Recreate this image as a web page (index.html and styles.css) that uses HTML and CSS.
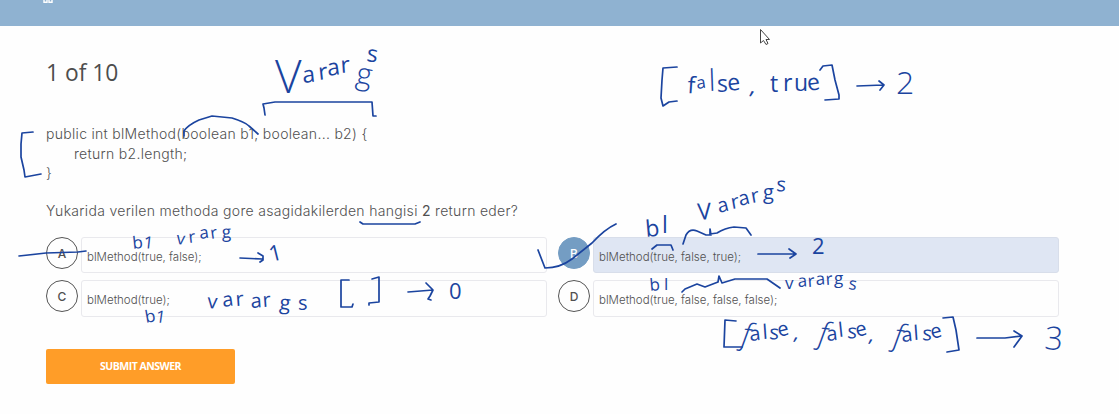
FILE: index.html
```html
<!DOCTYPE html>
<html lang="tr">
<head>
<meta charset="utf-8">
<title>Quiz</title>
<link rel="stylesheet" href="styles.css">
</head>
<body>
<header class="topbar">
  <svg class="topbar-icon" width="12" height="4" viewBox="0 0 12 4"><path d="M1 0v2.2h3V0M6 0v2.2H9V0"/></svg>
</header>
<main class="quiz">
  <h1 class="progress">1 of 10</h1>
  <pre class="code"><span class="l1">public int blMethod(boolean b1, boolean... b2) {</span>
<span class="l2">return b2.length;</span>
}</pre>
  <p class="question">Yukarida verilen methoda gore asagidakilerden hangisi <b>2</b> return eder?</p>
  <div class="options">
    <div class="option"><span class="letter">A</span><span class="answer">blMethod(true, false);</span></div>
    <div class="option selected"><span class="letter">B</span><span class="answer">blMethod(true, false, true);</span></div>
    <div class="option"><span class="letter">C</span><span class="answer">blMethod(true);</span></div>
    <div class="option"><span class="letter">D</span><span class="answer">blMethod(true, false, false, false);</span></div>
  </div>
  <button class="submit">SUBMIT ANSWER</button>
</main>
<svg class="ink" width="1119" height="414" viewBox="0 0 1119 414">
  <g class="stroke">
    <path d="M184 136V131Q188 125 199 120L212 116L232 118Q245 122 249 126L258 134"/>
    <path d="M265 115L264 108L263 104L275 102H372L373 116H376"/>
    <path d="M33 132L22 133L21 144V157L24 170L25 177L41 174"/>
    <path d="M360 222L363 224H415L420 222"/>
    <path d="M19 256L46 253L78 252L86 251"/>
    <path d="M240 258L262 259M258 253L263 256V260L260 262"/>
    <path d="M349 280H341V307H352L353 304M372 279L379 277V302L369 303V305"/>
    <path d="M408 292L433 290M426 283L433 290L430 296L428 299L431 300"/>
    <path d="M538 250L545 268Q560 268 572 259L592 243Q605 229 616 224"/>
    <path d="M652 249L657 245H671L673 250"/>
    <path d="M683 244L686 235Q690 228 697 231L706 235H711L710 229V234L717 233Q725 228 734 227L746 228L751 235"/>
    <path d="M758 254H796L789 249M796 254L790 258"/>
    <path d="M682 292L685 289L697 284L705 287L718 282L719 276L722 283L735 279H767L780 288"/>
    <path d="M677 67L663 68L662 80L661 98L663 106L669 102L677 101"/>
    <path d="M820 70L823 66L832 65L835 80L839 95V99L825 100"/>
    <path d="M857 86L883 85M879 81L884 85L880 90"/>
    <path d="M736 321L725 320L724 347H742"/>
    <path d="M943 318L953 317L956 330L959 350L947 352"/>
    <path d="M977 338H1005L1022 336M1014 331L1022 336L1014 347"/>
  </g>
  <g class="words">
    <text class="large" y="93"><tspan class="cap" x="275">V</tspan><tspan x="303 319 328 341" y="83 80 76 73" rotate="-6 -6 -8 -4">arar</tspan><tspan class="tall" x="355" y="83" rotate="10">g</tspan><tspan x="366" y="61" rotate="8">s</tspan></text>
    <text class="mid" x="133 143" y="249 248" rotate="-6 6">b1</text>
    <text class="mid" x="176 189 200 211 222" y="244 243 239 239 238" rotate="6 -6 -8 -8 -2">vrarg</text>
    <text class="digit" x="271" y="262" rotate="-14">1</text>
    <text class="mid" x="146 155" y="323 322" rotate="-10 8">b1</text>
    <text class="big" x="207 223 236 251 263 279 298" y="308 307 306 308 307 309 310" rotate="4 -8 -4 -4 -4 6 0">varargs</text>
    <text class="digit" x="449" y="299">0</text>
    <text class="large" x="646 662" y="237 233" rotate="-5 0">bl</text>
    <text class="big"><tspan class="large" x="698" y="220" rotate="-4">V</tspan><tspan x="719 732 740 752" y="213 209 206 203" rotate="-14 -10 -14 -10">arar</tspan><tspan x="763 776" y="199 191" rotate="0 4">gs</tspan></text>
    <text class="digit" x="812" y="254">2</text>
    <text class="mid" x="650 664" y="291 290" rotate="-5 0">bl</text>
    <text class="mid" x="785 798 808 816 826 834 848" y="289 287 287 285 285 284 289" rotate="0 -4 -4 -4 -4 0 8">varargs</text>
    <text class="large" x="687 697 709 717 728 749" y="93 89 91 92 91 93" rotate="4 -8 -2 0 -6 14">f<tspan class="mid">a</tspan><tspan class="tall">l</tspan>se,</text>
    <text class="large" x="770 783 794 808" y="92 91 91 91" rotate="0 0 0 -8">true</text>
    <text class="huge" x="896" y="94">2</text>
    <text class="big"><tspan class="slant" x="741" y="344" rotate="8">f</tspan><tspan x="750 763 769 779 793" y="341 339 339 337 339" rotate="-6 -4 4 -14 14">alse,</tspan></text>
    <text class="big"><tspan class="slant" x="818" y="343" rotate="8">f</tspan><tspan x="827 839 847 857 868" y="341 337 338 337 341" rotate="-6 -6 4 -14 14">alse,</tspan></text>
    <text class="big"><tspan class="slant" x="893" y="345" rotate="8">f</tspan><tspan x="902 914 922 932" y="342 340 340 339" rotate="-6 -4 4 -14">alse</tspan></text>
    <text class="huge" x="1044" y="349" rotate="4">3</text>
  </g>
  <path class="cursor" d="M760.5 29.5V43L763.5 40.5L766 44.5L768 43.5L766 39.5H769.5Z"/>
</svg>
</body>
</html>
```
FILE: styles.css
```css
* { box-sizing: border-box; }
body {
  position: relative;
  margin: 0;
  height: 414px;
  overflow: hidden;
  background: #fefefe;
  color: #505050;
  font-family: Inter, "Liberation Sans", sans-serif;
}
.topbar { height: 26px; padding-left: 43px; background: #8fb2d1; }
.topbar-icon { display: block; }
.topbar-icon path { fill: none; stroke: #fff; stroke-width: 1.4; }
.quiz { padding: 31px 60px 0 46px; }
.progress {
  margin: 0;
  height: 32px;
  font: 400 22.8px/32px "Open Sans", sans-serif;
  color: #4d4d4d;
}
.code {
  margin: 35px 0 0;
  font: 300 14px/19.6px Inter, sans-serif;
  letter-spacing: .3px;
}
.l2 { padding-left: 28px; }
.question { margin: 18px 0 0; font-size: 14px; font-weight: 300; line-height: 20px; letter-spacing: .31px; }
.options {
  display: grid;
  grid-template-columns: 501px 501px;
  column-gap: 11px;
  row-gap: 7px;
  margin-top: 16px;
}
.option { display: flex; height: 36.5px; }
.letter {
  flex: none;
  width: 32px;
  height: 32px;
  margin-right: 3px;
  border: 1px solid #555;
  border-radius: 50%;
  font-size: 12px;
  font-weight: 500;
  line-height: 31px;
  text-align: center;
}
.answer {
  flex: 1;
  padding-left: 5px;
  border: 1px solid #e9e9ed;
  border-radius: 3px;
  font-size: 11.5px;
  font-weight: 300;
  line-height: 38px;
}
.selected .letter { background: #749dc3; border-color: #749dc3; color: #fff; }
.selected .answer { background: #dfe6f3; border-color: #d8deea; }
.submit {
  display: block;
  width: 189px;
  height: 35px;
  margin-top: 32px;
  padding: 0 0 1px;
  border: 0;
  border-radius: 2px;
  background: #ff9d28;
  color: #fff;
  font: 700 10.5px "Open Sans", sans-serif;
  letter-spacing: -.5px;
}
.ink { position: absolute; left: 0; top: 0; }
.stroke { fill: none; stroke: #1b449f; stroke-width: 1.7; stroke-linecap: round; stroke-linejoin: round; }
.words { fill: #1b449f; font-family: "Open Sans", sans-serif; }
.mid { font-size: 17px; }
.big { font-size: 20px; }
.large { font-size: 23px; }
.digit { font-size: 22px; }
.tall { font-size: 30px; font-weight: 300; }
.huge { font-size: 32px; font-weight: 300; }
.cap { font-size: 46px; font-weight: 300; }
.slant { font-size: 30px; font-style: italic; font-weight: 300; }
.cursor { fill: #fff; stroke: #444; stroke-width: 1; }
```
